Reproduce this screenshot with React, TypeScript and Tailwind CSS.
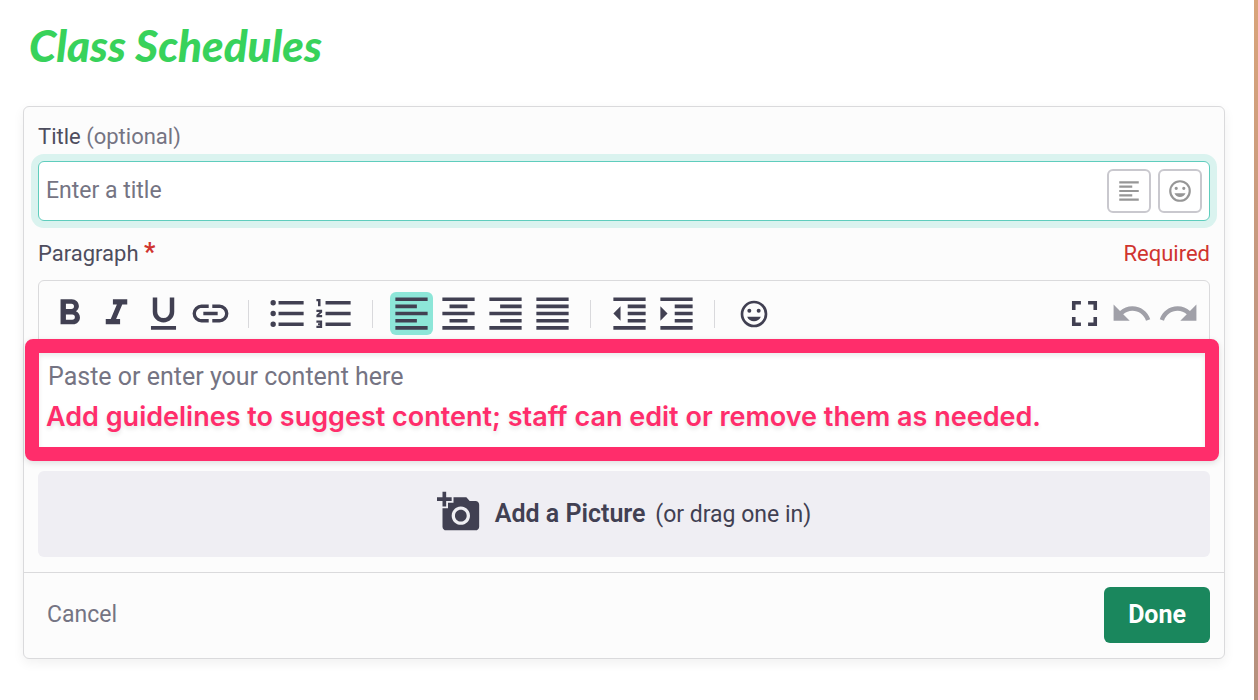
import type { ReactNode } from "react";

const paths = {
  bold: "M13.5,15.5H10V12.5H13.5A1.5,1.5 0 0,1 15,14A1.5,1.5 0 0,1 13.5,15.5M10,6.5H13A1.5,1.5 0 0,1 14.5,8A1.5,1.5 0 0,1 13,9.5H10M15.6,10.79C16.57,10.11 17.25,9 17.25,8C17.25,5.74 15.5,4 13.25,4H7V18H14.04C16.14,18 17.84,16.3 17.84,14.21C17.84,12.69 16.97,11.39 15.6,10.79Z",
  italic: "M10,4V7H12.21L8.79,15H6V18H14V15H11.79L15.21,7H18V4H10Z",
  underline:
    "M5,21H19V19H5V21M12,17A6,6 0 0,0 18,11V3H15.5V11A3.5,3.5 0 0,1 12,14.5A3.5,3.5 0 0,1 8.5,11V3H6V11A6,6 0 0,0 12,17Z",
  link: "M3.9,12C3.9,10.29 5.29,8.9 7,8.9H11V7H7A5,5 0 0,0 2,12A5,5 0 0,0 7,17H11V15.1H7C5.29,15.1 3.9,13.71 3.9,12M8,13H16V11H8V13M17,7H13V8.9H17C18.71,8.9 20.1,10.29 20.1,12C20.1,13.71 18.71,15.1 17,15.1H13V17H17A5,5 0 0,0 22,12A5,5 0 0,0 17,7Z",
  bullets:
    "M7,5H21V7H7V5M7,13V11H21V13H7M4,4.5A1.5,1.5 0 0,1 5.5,6A1.5,1.5 0 0,1 4,7.5A1.5,1.5 0 0,1 2.5,6A1.5,1.5 0 0,1 4,4.5M4,10.5A1.5,1.5 0 0,1 5.5,12A1.5,1.5 0 0,1 4,13.5A1.5,1.5 0 0,1 2.5,12A1.5,1.5 0 0,1 4,10.5M7,19V17H21V19H7M4,16.5A1.5,1.5 0 0,1 5.5,18A1.5,1.5 0 0,1 4,19.5A1.5,1.5 0 0,1 2.5,18A1.5,1.5 0 0,1 4,16.5Z",
  numbers:
    "M7,13V11H21V13H7M7,19V17H21V19H7M7,7V5H21V7H7M2.8,8V5.2H1.9V3.9H4.2V8H2.8M1.9,17.1V15.9H5.1V20.1H1.9V18.9H3.8V18.5H2.8V17.5H3.8V17.1H1.9M1.9,9.9H5.1V11.4L3.4,12.8H5.1V14.1H1.9V12.8L3.7,11.2H1.9V9.9Z",
  left: "M3,3H21V5H3V3M3,7H15V9H3V7M3,11H21V13H3V11M3,15H15V17H3V15M3,19H21V21H3V19Z",
  center: "M3,3H21V5H3V3M7,7H17V9H7V7M3,11H21V13H3V11M7,15H17V17H7V15M3,19H21V21H3V19Z",
  right: "M3,3H21V5H3V3M9,7H21V9H9V7M3,11H21V13H3V11M9,15H21V17H9V15M3,19H21V21H3V19Z",
  justify: "M3,3H21V5H3V3M3,7H21V9H3V7M3,11H21V13H3V11M3,15H21V17H3V15M3,19H21V21H3V19Z",
  outdent: "M11,13H21V11H11M11,9H21V7H11M3,3V5H21V3M3,21H21V19H3M3,12L7,16V8M11,17H21V15H11V17Z",
  indent: "M11,13H21V11H11M11,9H21V7H11M3,3V5H21V3M11,17H21V15H11M3,8V16L7,12M3,21H21V19H3V21Z",
  smile:
    "M12,17.5C14.33,17.5 16.3,16.04 17.11,14H6.89C7.69,16.04 9.67,17.5 12,17.5M8.5,11A1.5,1.5 0 0,0 10,9.5A1.5,1.5 0 0,0 8.5,8A1.5,1.5 0 0,0 7,9.5A1.5,1.5 0 0,0 8.5,11M15.5,11A1.5,1.5 0 0,0 17,9.5A1.5,1.5 0 0,0 15.5,8A1.5,1.5 0 0,0 14,9.5A1.5,1.5 0 0,0 15.5,11M12,20A8,8 0 0,1 4,12A8,8 0 0,1 12,4A8,8 0 0,1 20,12A8,8 0 0,1 12,20M12,2C6.47,2 2,6.5 2,12A10,10 0 0,0 12,22A10,10 0 0,0 22,12A10,10 0 0,0 12,2Z",
  fullscreen:
    "M5,5H10V7H7V10H5V5M14,5H19V10H17V7H14V5M17,14H19V19H14V17H17V14M10,17V19H5V14H7V17H10Z",
  undo: "M12.5,8C9.85,8 7.45,9 5.6,10.6L2,7V16H11L7.38,12.38C8.77,11.22 10.54,10.5 12.5,10.5C16.04,10.5 19.05,12.81 20.1,16L22.47,15.22C21.08,11.03 17.15,8 12.5,8Z",
  redo: "M18.4,10.6C16.55,9 14.15,8 11.5,8C6.85,8 2.92,11.03 1.54,15.22L3.9,16C4.95,12.81 7.95,10.5 11.5,10.5C13.45,10.5 15.23,11.22 16.62,12.38L13,16H22V7L18.4,10.6Z",
  camera:
    "M3 4V1h2v3h3v2H5v3H3V6H0V4h3zm3 6V7h3V4h7l1.83 2H21c1.1 0 2 .9 2 2v12c0 1.1-.9 2-2 2H5c-1.1 0-2-.9-2-2V10h3zm7 9c2.76 0 5-2.24 5-5s-2.24-5-5-5-5 2.24-5 5 2.24 5 5 5zm-3.2-5c0 1.77 1.43 3.2 3.2 3.2s3.2-1.43 3.2-3.2-1.43-3.2-3.2-3.2-3.2 1.43-3.2 3.2z",
};

type IconName = keyof typeof paths;

function Icon({ name, className }: { name: IconName; className: string }) {
  return (
    <svg viewBox="0 0 24 24" fill="currentColor" aria-hidden="true" className={`shrink-0 ${className}`}>
      <path fillRule={name === "smile" ? "evenodd" : "nonzero"} d={paths[name]} />
    </svg>
  );
}

function ToolButton({ name, label, active, disabled }: { name: IconName; label: string; active?: boolean; disabled?: boolean }) {
  return (
    <button
      type="button"
      aria-label={label}
      aria-pressed={active}
      disabled={disabled}
      className={`flex size-[43px] items-center justify-center rounded-md ${active ? "bg-[#8de6d8]" : ""} ${disabled ? "text-[#a0a0a8]" : "text-[#414052]"}`}
    >
      <Icon name={name} className={name === "smile" ? "size-8" : "size-[43px]"} />
    </button>
  );
}

function Group({ children }: { children: ReactNode }) {
  return <div className="flex gap-1">{children}</div>;
}

function Divider() {
  return <div className="mr-[17px] ml-4 h-7 w-px bg-[#d9d9dc]" />;
}

function TitleButton({ name, label }: { name: IconName; label: string }) {
  return (
    <button
      type="button"
      aria-label={label}
      className="flex size-11 items-center justify-center rounded-md border-2 border-[#c9c8ce] text-[#969696]"
    >
      <Icon name={name} className="size-[26px]" />
    </button>
  );
}

export default function App() {
  return (
    <div className="flex min-h-screen bg-white font-[Roboto,sans-serif] text-[#4e4d5e]">
      <main className="min-w-0 flex-1 pt-5 pr-[29px] pb-10 pl-[23px]">
        <h1 className="pl-1.5 [font-family:Lato,sans-serif] text-[44px] leading-[50px] font-black text-[#38d25b] italic">
          Class Schedules
        </h1>

        <form
          className="mt-9 rounded-md border border-[#dadadc] bg-[#fcfcfc] shadow-[0_4px_12px_rgba(0,0,0,0.06)]"
          onSubmit={(e) => e.preventDefault()}
        >
          <div className="px-3.5 pt-3.5 pb-[15px]">
            <label htmlFor="title" className="block text-[22px] leading-8">
              Title <span className="text-[#757483]">(optional)</span>
            </label>
            <div className="mt-2 flex h-[60px] items-center gap-[7px] rounded-md border border-[#5fcdbd] bg-white pr-[7px] shadow-[0_0_0_7px_#daf3ef]">
              <input
                id="title"
                type="text"
                placeholder="Enter a title"
                className="h-full min-w-0 flex-1 bg-transparent pb-0.5 pl-[7px] text-[23px] outline-none placeholder:text-[#757483]"
              />
              <TitleButton name="left" label="Align text" />
              <TitleButton name="smile" label="Insert emoji" />
            </div>

            <div className="mt-[17px] flex justify-between text-[22px] leading-8">
              <label htmlFor="paragraph">
                Paragraph <span className="text-[25px] leading-5 font-bold text-[#d0342f]">*</span>
              </label>
              <span className="text-[#d0342f]">Required</span>
            </div>

            <div className="mt-2.5 rounded-md border border-[#dadadc]">
              <div role="toolbar" aria-label="Formatting" className="flex items-center justify-between px-[9px] pt-[11px] pb-3">
                <div className="flex items-center">
                  <Group>
                    <ToolButton name="bold" label="Bold" />
                    <ToolButton name="italic" label="Italic" />
                    <ToolButton name="underline" label="Underline" />
                    <ToolButton name="link" label="Link" />
                  </Group>
                  <Divider />
                  <Group>
                    <ToolButton name="bullets" label="Bulleted list" />
                    <ToolButton name="numbers" label="Numbered list" />
                  </Group>
                  <Divider />
                  <Group>
                    <ToolButton name="left" label="Align left" active />
                    <ToolButton name="center" label="Align center" />
                    <ToolButton name="right" label="Align right" />
                    <ToolButton name="justify" label="Justify" />
                  </Group>
                  <Divider />
                  <Group>
                    <ToolButton name="outdent" label="Decrease indent" />
                    <ToolButton name="indent" label="Increase indent" />
                  </Group>
                  <Divider />
                  <ToolButton name="smile" label="Insert emoji" />
                </div>
                <Group>
                  <ToolButton name="fullscreen" label="Fullscreen" />
                  <ToolButton name="undo" label="Undo" disabled />
                  <ToolButton name="redo" label="Redo" disabled />
                </Group>
              </div>

              <div className="relative h-[108px] bg-white">
                <textarea
                  id="paragraph"
                  required
                  placeholder="Paste or enter your content here"
                  className="block h-full w-full resize-none overflow-hidden bg-transparent px-[9px] pt-3.5 text-[25px] leading-8 outline-none placeholder:text-[#757483]"
                />
                <div className="pointer-events-none absolute -top-2 -right-2.5 -bottom-1.5 -left-3.5 flex items-end rounded-lg border-[14px] border-[#ff2d6b] px-[7px] pb-3.5 [font-family:Inter,sans-serif] text-[27px] leading-8 font-semibold whitespace-nowrap text-[#ff2d6b] shadow-[0_2px_6px_rgba(0,0,0,0.12),inset_0_3px_5px_rgba(0,0,0,0.08)] text-shadow-[0_3px_4px_rgba(0,0,0,0.1)]">
                  Add guidelines to suggest content; staff can edit or remove them as needed.
                </div>
              </div>
            </div>

            <button
              type="button"
              className="mt-[15px] flex h-[86px] w-full items-center justify-center gap-3.5 rounded-md bg-[#efeef3] text-[#414052]"
            >
              <Icon name="camera" className="mb-1 size-11" />
              <span className="text-[23px] leading-8">
                <span className="mr-1 text-[25px] font-semibold">Add a Picture</span> (or drag one in)
              </span>
            </button>
          </div>

          <div className="flex items-center justify-between border-t border-[#dadadc] px-3.5 pt-3.5 pb-[15px]">
            <button type="button" className="px-[9px] py-3 text-[23px] leading-8 text-[#757483]">
              Cancel
            </button>
            <button type="submit" className="rounded-md bg-[#1a875d] px-6 py-3 text-[25px] leading-8 font-bold text-white">
              Done
            </button>
          </div>
        </form>
      </main>
      <div className="w-1 bg-linear-to-b from-[#d9a47a] via-[#c59880] via-40% to-[#b6917e]" />
    </div>
  );
}
